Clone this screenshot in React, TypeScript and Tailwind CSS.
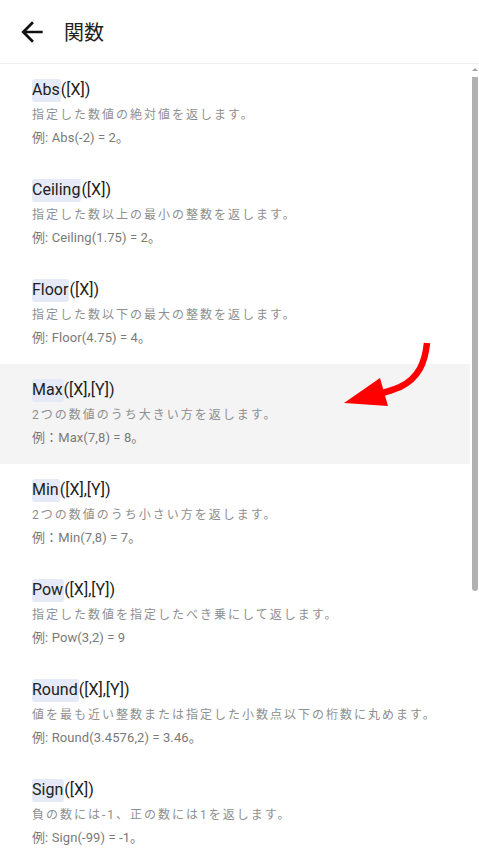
import React from 'react';

type Fn = { name: string; args: string; desc: string; example: string };

const functions: Fn[] = [
  { name: 'Abs', args: '([X])', desc: '指定した数値の絶対値を返します。', example: '例: Abs(-2) = 2。' },
  { name: 'Ceiling', args: '([X])', desc: '指定した数以上の最小の整数を返します。', example: '例: Ceiling(1.75) = 2。' },
  { name: 'Floor', args: '([X])', desc: '指定した数以下の最大の整数を返します。', example: '例: Floor(4.75) = 4。' },
  { name: 'Max', args: '([X],[Y])', desc: '2つの数値のうち大きい方を返します。', example: '例：Max(7,8) = 8。' },
  { name: 'Min', args: '([X],[Y])', desc: '2つの数値のうち小さい方を返します。', example: '例：Min(7,8) = 7。' },
  { name: 'Pow', args: '([X],[Y])', desc: '指定した数値を指定したべき乗にして返します。', example: '例: Pow(3,2) = 9' },
  { name: 'Round', args: '([X],[Y])', desc: '値を最も近い整数または指定した小数点以下の桁数に丸めます。', example: '例: Round(3.4576,2) = 3.46。' },
  { name: 'Sign', args: '([X])', desc: '負の数には-1、正の数には1を返します。', example: '例: Sign(-99) = -1。' },
];

const font = { fontFamily: 'Roboto, "Noto Sans CJK JP", sans-serif' };

const FunctionRow: React.FC<{ fn: Fn; active?: boolean }> = ({ fn, active }) => (
  <div className={`h-[100px] pl-8 pt-[15px] ${active ? 'bg-[#f4f4f4]' : 'bg-white'}`}>
    <div className="h-[22px] flex items-center text-[16px] text-[#212121] leading-[22px]">
      <span className="bg-[#e6e9f7] rounded-[3px] h-[23px] flex items-center pr-[1px]">{fn.name}</span>
      <span>{fn.args}</span>
    </div>
    <p className="mt-[4px] text-[12px] leading-[20px] tracking-[2px] text-[#8f8f8f]">{fn.desc}</p>
    <p className="mt-[3px] text-[13px] leading-[20px] tracking-[0.1px] text-[#7a7a7a]">{fn.example}</p>
  </div>
);

export default function App() {
  return (
    <div className="relative w-[479px] h-[858px] overflow-hidden bg-white" style={font}>
      {/* Header */}
      <div className="h-[64px] flex items-center border-b border-[#eeeeee]">
        <svg className="ml-[16px]" width="32" height="32" viewBox="0 0 24 24" fill="#111">
          <path d="M20 11H7.83l5.59-5.59L12 4l-8 8 8 8 1.41-1.41L7.83 13H20v-2z" />
        </svg>
        <h1 className="ml-[16px] text-[20px] text-[#222]" style={{ fontFamily: '"Noto Sans CJK JP", sans-serif' }}>
          関数
        </h1>
      </div>

      <div className="flex">
        {/* List */}
        <div className="w-[470px]">
          {functions.map((fn) => (
            <FunctionRow key={fn.name} fn={fn} active={fn.name === 'Max'} />
          ))}
        </div>

        {/* Scrollbar */}
        <div className="w-[9px] flex flex-col items-center pt-[4px]">
          <div className="w-0 h-0 border-l-[3px] border-r-[3px] border-b-[3px] border-l-transparent border-r-transparent border-b-[#a3a3a3]" />
          <div className="mt-[6px] w-[6px] h-[514px] bg-[#b1b1b1] rounded-b-[3px]" />
        </div>
      </div>

      {/* Annotation arrow */}
      <svg className="absolute left-0 top-0 pointer-events-none" width="479" height="858">
        <path d="M427 343 C 425 362, 419 378, 400 387 C 393 390, 386 392, 378 394" stroke="#ff0000" strokeWidth="6.5" fill="none" strokeLinecap="butt" />
        <polygon points="344,403 380,378 388,406" fill="#ff0000" />
      </svg>
    </div>
  );
}
